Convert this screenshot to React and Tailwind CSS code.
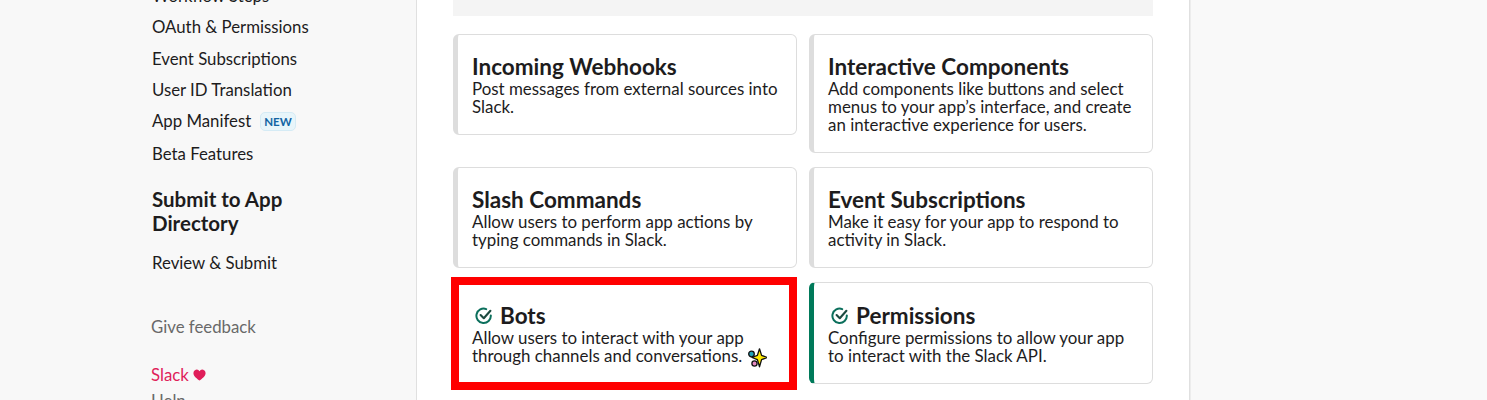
const lato = { fontFamily: "Lato, 'Open Sans', sans-serif" };

function Check() {
  return (
    <svg width="18" height="18" viewBox="0 0 18 18" fill="none" className="block">
      <path d="M15.8 8.4A7.2 7.2 0 1 1 11.2 2.1" stroke="#0b6f5c" strokeWidth="2" strokeLinecap="round" />
      <path d="M5.6 8 8.8 11.2 15.4 3.8" stroke="#1d4a40" strokeWidth="2.1" strokeLinecap="round" strokeLinejoin="round" />
    </svg>
  );
}

function Sparkle() {
  return (
    <svg width="20" height="20" viewBox="0 0 20 20" className="inline-block align-[-6px] ml-[5px]">
      <circle cx="4.5" cy="6" r="2.8" fill="#1fa3b8" stroke="#111" strokeWidth="1.3" />
      <circle cx="7.5" cy="15.5" r="2.6" fill="#e58ac0" stroke="#111" strokeWidth="1.3" />
      <path d="M12.5 .8 14.6 7.4 20 9.5 14.6 11.6 12.5 18.8 10.4 11.6 5 9.5 10.4 7.4Z" fill="#ffe800" stroke="#111" strokeWidth="1.3" strokeLinejoin="round" />
    </svg>
  );
}

function Card({ title, desc, accent, done, children }) {
  return (
    <div className={`relative bg-white border border-[#dddddd] rounded-[6px] border-l-[5px] ${accent ? "border-l-[#007a5a]" : "border-l-[#dddddd]"} pl-[14px] pr-3 pb-[18px] ${done ? "pt-[19px]" : "pt-[18px]"}`}>
      <div className="flex items-start h-[27px]">
        {done && <span className="ml-[3px] mr-[7px] mt-[5px] shrink-0"><Check /></span>}
        <span className="text-[22.5px] leading-[28px] font-bold text-[#1d1c1d]">{title}</span>
      </div>
      <p className="text-[16.9px] leading-[18px] text-[#1d1c1d]">{desc}{children}</p>
    </div>
  );
}

function Item({ children, className = "" }) {
  return <div className={`text-[16.8px] leading-[24px] text-[#1d1c1d] ${className}`}>{children}</div>;
}

export default function App() {
  return (
    <div style={lato} className="flex h-[400px] overflow-hidden bg-[#f9f9f9]">
      <aside className="w-[417px] shrink-0 h-[400px] overflow-hidden bg-[#f8f8f8] border-r border-[#e0e0e0] pl-[152px]">
        <div className="flex flex-col -mt-[16px]">
          <Item className="h-[31px]">Workflow Steps</Item>
          <Item className="h-[32px]">OAuth &amp; Permissions</Item>
          <Item className="h-[31px]">Event Subscriptions</Item>
          <Item className="h-[31px]">User ID Translation</Item>
          <Item className="h-[33px] flex items-start gap-[9px]">
            App Manifest
            <span className="mt-[3px] h-[19px] px-[3px] flex items-center text-[11.5px] font-bold leading-none text-[#1264a3] bg-[#e8f5fa] border border-[#d5ebf5] rounded-[5px]">NEW</span>
          </Item>
          <Item className="h-[32px]">Beta Features</Item>
          <div className="mt-[13px] text-[20.5px] leading-[24px] font-bold text-[#1d1c1d] w-[170px]">Submit to App Directory</div>
          <Item className="mt-[16px]">Review &amp; Submit</Item>
          <div className="-ml-[1px] mt-[40px] text-[16.8px] leading-[24px] text-[#696969]">Give feedback</div>
          <div className="-ml-[1px] mt-[24px] text-[16.8px] leading-[24px] text-[#e01e5a] flex items-center gap-[4px]">
            Slack
            <svg width="13" height="12" viewBox="0 0 13 12"><path d="M6.5 11.6C4.4 9.9.4 7.5.4 4A3.3 3.3 0 0 1 6.5 2.2 3.3 3.3 0 0 1 12.6 4c0 3.5-4 5.9-6.1 7.6Z" fill="#e01e5a" /></svg>
          </div>
          <div className="-ml-[1px] mt-[2px] text-[16.8px] leading-[24px] text-[#696969]">Help</div>
        </div>
      </aside>
      <main className="w-[772px] shrink-0 h-[400px] overflow-hidden bg-white pl-[36px] pr-[36px] shadow-[1px_0_0_#e0e0e0,2px_0_0_#ededed]">
        <div className="h-[16px] bg-[#f4f4f4]" />
        <div className="mt-[18px] grid grid-cols-[344px_344px] gap-x-[12px] gap-y-[14px] items-start">
          <Card title="Incoming Webhooks" desc="Post messages from external sources into Slack." />
          <Card title="Interactive Components" desc="Add components like buttons and select menus to your app’s interface, and create an interactive experience for users." />
          <Card title="Slash Commands" desc="Allow users to perform app actions by typing commands in Slack." />
          <Card title="Event Subscriptions" desc="Make it easy for your app to respond to activity in Slack." />
          <Card title="Bots" done desc="Allow users to interact with your app through channels and conversations.">
            <Sparkle />
            <div className="absolute -left-[7px] -top-[6px] -right-[1px] -bottom-[4px] border-[8px] border-[#ff0000]" />
          </Card>
          <Card title="Permissions" done accent desc="Configure permissions to allow your app to interact with the Slack API." />
        </div>
      </main>
    </div>
  );
}
